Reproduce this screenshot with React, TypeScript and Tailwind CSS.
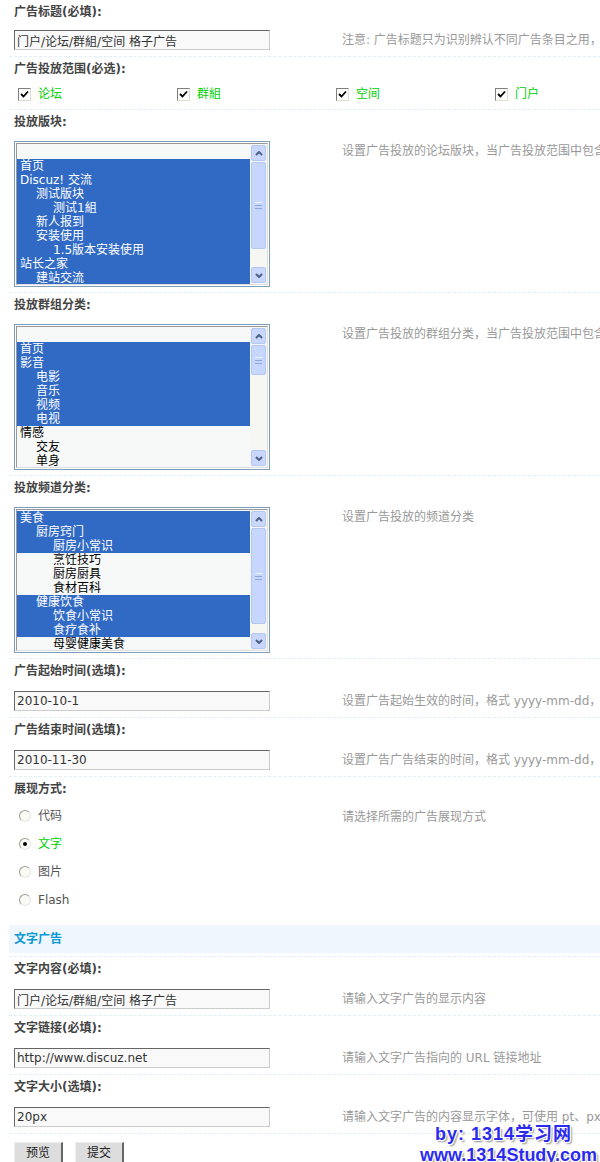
import React from 'react'

type Opt = { t: string; lv: number; sel?: boolean }

const forumOpts: Opt[] = [
  { t: '', lv: 0 },
  { t: '首页', lv: 0, sel: true },
  { t: 'Discuz! 交流', lv: 0, sel: true },
  { t: '测试版块', lv: 1, sel: true },
  { t: '测试1組', lv: 2, sel: true },
  { t: '新人报到', lv: 1, sel: true },
  { t: '安装使用', lv: 1, sel: true },
  { t: '1.5版本安装使用', lv: 2, sel: true },
  { t: '站长之家', lv: 0, sel: true },
  { t: '建站交流', lv: 1, sel: true },
]

const groupOpts: Opt[] = [
  { t: '', lv: 0 },
  { t: '首页', lv: 0, sel: true },
  { t: '影音', lv: 0, sel: true },
  { t: '电影', lv: 1, sel: true },
  { t: '音乐', lv: 1, sel: true },
  { t: '视频', lv: 1, sel: true },
  { t: '电视', lv: 1, sel: true },
  { t: '情感', lv: 0 },
  { t: '交友', lv: 1 },
  { t: '单身', lv: 1 },
]

const channelOpts: Opt[] = [
  { t: '美食', lv: 0, sel: true },
  { t: '厨房窍门', lv: 1, sel: true },
  { t: '厨房小常识', lv: 2, sel: true },
  { t: '烹饪技巧', lv: 2 },
  { t: '厨房厨具', lv: 2 },
  { t: '食材百科', lv: 2 },
  { t: '健康饮食', lv: 1, sel: true },
  { t: '饮食小常识', lv: 2, sel: true },
  { t: '食疗食补', lv: 2, sel: true },
  { t: '母婴健康美食', lv: 2 },
]

const indent = ['pl-[3px]', 'pl-[19px]', 'pl-[36px]']

function Sep() {
  return <div className="h-px border-t border-dashed border-[#deeffb]" />
}

function Label({ children, first }: { children: React.ReactNode; first?: boolean }) {
  return (
    <div className={(first ? 'h-[23px]' : 'h-[25px]') + ' pt-[3px] pl-[5px] leading-[18px] font-bold text-[#444]'}>
      {children}
    </div>
  )
}

function Row({ left, tip, pt = 'pt-[7px]', pb = 'pb-[6px]' }: { left: React.ReactNode; tip?: string; pt?: string; pb?: string }) {
  return (
    <div className={'grid grid-cols-[333px_1fr] ' + pt + ' ' + pb}>
      <div className="pl-[5px]">{left}</div>
      <div className="leading-[20px] text-[#999] whitespace-nowrap">{tip}</div>
    </div>
  )
}

function TextBox({ value }: { value: string }) {
  return (
    <input
      readOnly
      value={value}
      className="block w-[256px] h-[20px] border border-t-[#666] border-l-[#666] border-r-[#ccc] border-b-[#ccc] bg-[#f9f9f9] px-[2px] text-[12px] leading-[18px] text-[#333] outline-none"
    />
  )
}

function ScrollBtn({ up }: { up?: boolean }) {
  return (
    <div className="h-[16px] mx-px rounded-[2px] border border-[#b4c8f6] bg-[#c8d7fb] flex items-center justify-center">
      <svg width="8" height="5" viewBox="0 0 8 5">
        <path d={up ? 'M1 4 L4 1 L7 4' : 'M1 1 L4 4 L7 1'} stroke="#4d6185" strokeWidth="2" fill="none" />
      </svg>
    </div>
  )
}

function ListBox({ opts, thumbTop, thumbH }: { opts: Opt[]; thumbTop: number; thumbH: number }) {
  return (
    <div className="w-[256px] h-[146px] border border-[#7f9db9] p-px bg-white">
      <div className="h-full flex border border-t-[#999] border-l-[#999] border-r-[#ddd] border-b-[#ddd] bg-[#f7f9f9]">
        <div className="flex-1 pt-px overflow-hidden">
          {opts.map((o, i) => (
            <div
              key={i}
              className={
                'h-[14px] leading-[14px] whitespace-nowrap ' +
                indent[o.lv] +
                (o.sel ? ' bg-[#316ac5] text-white' : ' text-black')
              }
            >
              {o.t}
            </div>
          ))}
        </div>
        <div className="w-[17px] flex flex-col bg-[#f6f6f2] py-px">
          <ScrollBtn up />
          <div className="flex-1">
            <div
              className="mx-px rounded-[2px] border border-[#b4c8f6] bg-[#c6d6fc] flex items-center justify-center"
              style={{ marginTop: thumbTop, height: thumbH }}
            >
              <div className="flex flex-col gap-[2px]">
                <div className="w-[7px] h-px bg-[#eef3fe]" />
                <div className="w-[7px] h-px bg-[#8ca6e0]" />
                <div className="w-[7px] h-px bg-[#8ca6e0]" />
              </div>
            </div>
          </div>
          <ScrollBtn />
        </div>
      </div>
    </div>
  )
}

function Check({ label }: { label: string }) {
  return (
    <div className="w-[159px] flex items-center">
      <span className="ml-[4px] w-[13px] h-[13px] border border-t-[#808080] border-l-[#808080] border-r-[#e0ddd4] border-b-[#e0ddd4] bg-[#fdfdfb] flex items-center justify-center">
        <svg width="9" height="8" viewBox="0 0 9 8">
          <path d="M1 4 L3.5 6.5 L8 1.5" stroke="#000" strokeWidth="1.8" fill="none" />
        </svg>
      </span>
      <span className="ml-[7px] text-[#00d000] leading-[14px]">{label}</span>
    </div>
  )
}

function Radio({ label, on }: { label: string; on?: boolean }) {
  return (
    <div className="h-[28px] flex items-center pl-[10px]">
      <span className="w-[12px] h-[12px] rounded-full border border-[#9a9a8c] border-r-[#e6e6dc] border-b-[#e6e6dc] bg-[#fafaf7] flex items-center justify-center">
        {on && <span className="w-[4px] h-[4px] rounded-full bg-black" />}
      </span>
      <span className={'ml-[7px] ' + (on ? 'text-[#00d000]' : 'text-[#555]')}>{label}</span>
    </div>
  )
}

export default function App() {
  return (
    <div className="w-[600px] h-[1162px] overflow-hidden bg-white relative font-['DejaVu_Sans','Noto_Sans_CJK_SC',sans-serif] text-[12px]">
      <div className="w-[1000px] pl-[9px]">
        <Label first>广告标题(必填):</Label>
        <Row left={<TextBox value="门户/论坛/群組/空间 格子广告" />} tip="注意: 广告标题只为识别辨认不同广告条目之用，并不会在广告中显示" />
        <Sep />

        <Label>广告投放范围(必选):</Label>
        <div className="h-[27px] pt-[5px] pl-[5px] flex items-start">
          <Check label="论坛" />
          <Check label="群組" />
          <Check label="空间" />
          <Check label="门户" />
        </div>
        <Sep />

        <Label>投放版块:</Label>
        <Row
          left={<ListBox opts={forumOpts} thumbTop={1} thumbH={87} />}
          tip="设置广告投放的论坛版块，当广告投放范围中包含“论坛”时有效"
          pt="pt-[6px]"
          pb="pb-[5px]"
        />
        <Sep />

        <Label>投放群组分类:</Label>
        <Row
          left={<ListBox opts={groupOpts} thumbTop={1} thumbH={30} />}
          tip="设置广告投放的群组分类，当广告投放范围中包含“群組”时有效"
          pt="pt-[6px]"
          pb="pb-[5px]"
        />
        <Sep />

        <Label>投放频道分类:</Label>
        <Row
          left={<ListBox opts={channelOpts} thumbTop={1} thumbH={96} />}
          tip="设置广告投放的频道分类"
          pt="pt-[6px]"
          pb="pb-[5px]"
        />
        <Sep />

        <Label>广告起始时间(选填):</Label>
        <Row left={<TextBox value="2010-10-1" />} tip="设置广告起始生效的时间，格式 yyyy-mm-dd，留空为不限制起始时间" />
        <Sep />

        <Label>广告结束时间(选填):</Label>
        <Row left={<TextBox value="2010-11-30" />} tip="设置广告广告结束的时间，格式 yyyy-mm-dd，留空为不限制结束时间" />
        <Sep />

        <Label>展现方式:</Label>
        <div className="grid grid-cols-[333px_1fr] pb-[11px]">
          <div>
            <Radio label="代码" />
            <Radio label="文字" on />
            <Radio label="图片" />
            <Radio label="Flash" />
          </div>
          <div className="pt-[5px] leading-[20px] text-[#999]">请选择所需的广告展现方式</div>
        </div>

        <div className="h-[28px] bg-[#f0f6fd] pl-[5px] flex items-center font-bold text-[#0a9ad4]">文字广告</div>
        <div className="h-[3px]" />
        <Sep />

        <Label>文字内容(必填):</Label>
        <Row left={<TextBox value="门户/论坛/群組/空间 格子广告" />} tip="请输入文字广告的显示内容" />
        <Sep />

        <Label>文字链接(必填):</Label>
        <Row left={<TextBox value="http://www.discuz.net" />} tip="请输入文字广告指向的 URL 链接地址" />
        <Sep />

        <Label>文字大小(选填):</Label>
        <Row left={<TextBox value="20px" />} tip="请输入文字广告的内容显示字体，可使用 pt、px、em 为单位" />
        <Sep />

        <div className="pt-[8px] pl-[5px] flex gap-[12px]">
          <button className="w-[49px] h-[22px] bg-[#ddd] border border-t-[#eee] border-l-[#eee] border-r-[#666] border-b-[#666] border-r-2 text-[#222] leading-[20px]">
            预览
          </button>
          <button className="w-[49px] h-[22px] bg-[#ddd] border border-t-[#eee] border-l-[#eee] border-r-[#666] border-b-[#666] border-r-2 text-[#222] leading-[20px]">
            提交
          </button>
        </div>
      </div>

      <div className="absolute left-[420px] top-[1124px] font-['Liberation_Sans','Noto_Sans_CJK_SC',sans-serif] font-bold text-[#2b2bf0] [text-shadow:1px_1px_0_#fff,-1px_-1px_0_#fff,1px_-1px_0_#fff,-1px_1px_0_#fff,2px_2px_2px_#888]">
        <div className="pl-[15px] text-[18px] leading-[21px] tracking-[1px]">by: 1314学习网</div>
        <div className="text-[18px] leading-[21px]">www.1314Study.com</div>
      </div>
    </div>
  )
}
